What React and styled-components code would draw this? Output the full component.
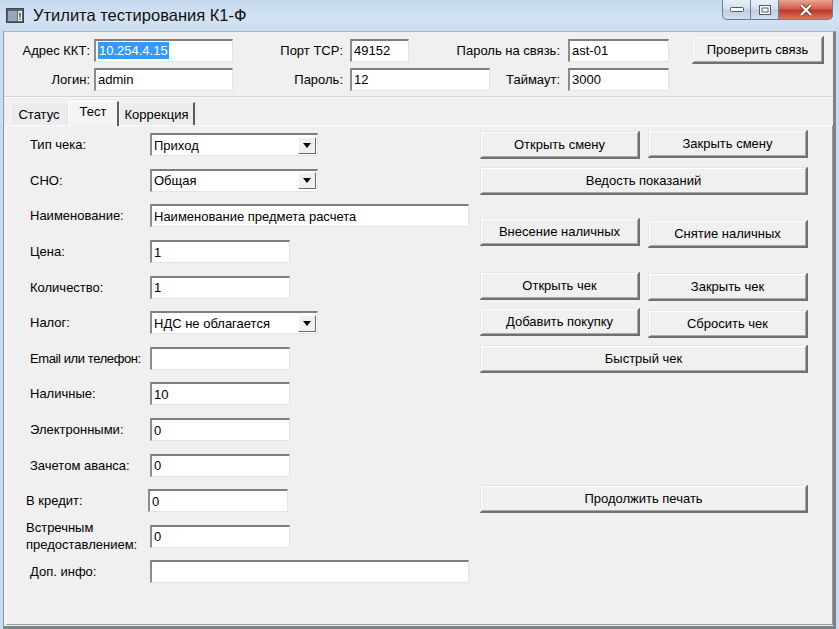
import React from "react";
import styled, { createGlobalStyle } from "styled-components";

const GlobalStyle = createGlobalStyle`
  html, body {
    margin: 0;
    padding: 0;
    background: #f0f0f0;
  }
  body {
    font-family: "Liberation Sans", Arial, sans-serif;
    font-size: 13px;
    color: #000;
  }
`;

const Window = styled.div`
  width: 839px;
  height: 629px;
  display: flex;
  flex-direction: column;
  background: #c9dcf0;
  overflow: hidden;
`;

const TitleBar = styled.div`
  height: 31px;
  display: flex;
  align-items: flex-start;
  background: linear-gradient(180deg, #c4d9ee 0%, #d3e3f4 60%, #cadcf0 100%);
  flex-shrink: 0;
`;

const AppIcon = styled.div`
  margin: 8px 0 0 6px;
  width: 18px;
  height: 15px;
  display: flex;
`;

const Title = styled.div`
  margin: 6px 0 0 9px;
  font-size: 16.5px;
  color: #111;
  flex: 1;
`;

const Controls = styled.div`
  display: flex;
  margin-right: 6px;
`;

const CtlButton = styled.div`
  width: ${(p) => p.$w}px;
  height: 20px;
  display: flex;
  align-items: center;
  justify-content: center;
  box-sizing: border-box;
  border: 1px solid #6f7f93;
  border-top: none;
  border-left: ${(p) => (p.$first ? "1px solid #6f7f93" : "none")};
  border-bottom-left-radius: ${(p) => (p.$first ? "5px" : "0")};
  border-bottom-right-radius: ${(p) => (p.$last ? "5px" : "0")};
  background: ${(p) =>
    p.$close
      ? "linear-gradient(180deg, #e8a493 0%, #d2604b 45%, #c0392b 55%, #d77a60 100%)"
      : "linear-gradient(180deg, #e9f0f8 0%, #d4e0ee 45%, #bfcfe2 55%, #d2dfee 100%)"};
`;

const Body = styled.div`
  flex: 1;
  display: flex;
  flex-direction: column;
  margin: 0 3px 0 3px;
  background: #f0f0f0;
  border-left: 1px solid #8a9bb0;
  border-right: 3px solid #7b828c;
  border-bottom: 3px solid #7b828c;
  border-top: 1px solid #a9b9cc;
  min-height: 0;
`;

const Header = styled.div`
  display: grid;
  grid-template-columns: 90px 139px 117px 140px 78px 101px 155px;
  grid-template-rows: 22px 22px;
  row-gap: 7px;
  padding: 7px 0 6px 0;
  align-items: center;
`;

const HLabel = styled.div`
  display: flex;
  justify-content: flex-end;
  min-width: 0;
  padding-right: ${(p) => p.$pr || 4}px;
  white-space: nowrap;
`;

const TextBox = styled.div`
  width: ${(p) => p.$w || 140}px;
  height: 23px;
  box-sizing: border-box;
  background: #fff;
  border-top: 2px solid #7e7e7e;
  border-left: 2px solid #8c8c8c;
  border-right: 1px solid #e4e4e4;
  border-bottom: 1px solid #e4e4e4;
  display: flex;
  align-items: center;
  padding-left: 2px;
  white-space: nowrap;
  overflow: hidden;
  flex-shrink: 0;
  margin-left: ${(p) => p.$dx || 0}px;
`;

const Selected = styled.span`
  background: #3399ff;
  color: #fff;
  padding: 1px 1px;
`;

const Button = styled.div`
  box-sizing: border-box;
  width: ${(p) => (p.$w ? `${p.$w}px` : "auto")};
  flex: ${(p) => (p.$w ? "none" : 1)};
  height: ${(p) => p.$h || 28}px;
  margin-top: ${(p) => p.$dy || 0}px;
  display: flex;
  align-items: center;
  justify-content: center;
  background: #f0f0f0;
  border-top: 1px solid #e6e6e6;
  border-left: 1px solid #e6e6e6;
  border-right: 2px solid #707070;
  border-bottom: 2px solid #707070;
  box-shadow: inset 1px 1px 0 #ffffff, inset -1px -1px 0 #a8a8a8;
  white-space: nowrap;
`;

const HeaderButton = styled(Button)`
  justify-self: end;
`;

const Divider = styled.div`
  height: 1px;
  background: #d4d4d4;
  border-bottom: 1px solid #fbfbfb;
`;

const TabStrip = styled.div`
  display: flex;
  align-items: flex-end;
  height: 27px;
  padding-left: 6px;
`;

const Tab = styled.div`
  box-sizing: border-box;
  width: ${(p) => p.$w}px;
  height: ${(p) => (p.$active ? 25 : 23)}px;
  display: flex;
  align-items: ${(p) => (p.$active ? "flex-start" : "center")};
  justify-content: center;
  padding-top: ${(p) => (p.$active ? 2 : 0)}px;
  background: ${(p) => (p.$active ? "#f4f4f4" : "#ececec")};
  border-top: 1px solid ${(p) => (p.$active ? "#ffffff" : "#f8f8f8")};
  border-left: 1px solid ${(p) => (p.$active ? "#ffffff" : "#f6f6f6")};
  border-right: ${(p) => (p.$dark ? "2px solid #5d5d5d" : "1px solid #e2e2e2")};
  margin-bottom: ${(p) => (p.$active ? -1 : 0)}px;
  position: relative;
  z-index: ${(p) => (p.$active ? 1 : 0)};
`;

const Panel = styled.div`
  flex: 1;
  margin: 0 0 1px 2px;
  display: flex;
  background: #f0f0f0;
  border-top: 1px solid #fcfcfc;
  border-left: 1px solid #fcfcfc;
  border-right: 1px solid #9a9a9a;
  border-bottom: 1px solid #9a9a9a;
  min-height: 0;
`;

const Form = styled.div`
  width: 450px;
  padding: 1px 0 0 23px;
  display: flex;
  flex-direction: column;
`;

const Row = styled.div`
  height: 35.6px;
  display: flex;
  align-items: center;
`;

const Label = styled.div`
  width: 120px;
  flex-shrink: 0;
  margin-left: ${(p) => p.$dx || 0}px;
  margin-right: ${(p) => -(p.$dx || 0)}px;
  letter-spacing: ${(p) => (p.$tight ? "-0.4px" : "normal")};
  line-height: 17px;
  white-space: nowrap;
`;

const Combo = styled(TextBox)`
  width: 168px;
  justify-content: space-between;
  padding-right: 1px;
`;

const DropButton = styled.div`
  width: 18px;
  height: 17px;
  box-sizing: border-box;
  display: flex;
  align-items: center;
  justify-content: center;
  background: #f0f0f0;
  border-top: 1px solid #fff;
  border-left: 1px solid #fff;
  border-right: 1px solid #6a6a6a;
  border-bottom: 1px solid #6a6a6a;
`;

const Actions = styled.div`
  width: 328px;
  padding-top: 5px;
  display: flex;
  flex-direction: column;
`;

const ActionRow = styled.div`
  display: flex;
  align-items: flex-start;
  height: 28px;
  gap: 8px;
  margin-top: ${(p) => p.$mt || 0}px;
`;

const WinIcon = () => (
  <svg width="18" height="15" viewBox="0 0 18 15">
    <rect x="0.5" y="0.5" width="17" height="14" fill="#5a6370" stroke="#3e444c" />
    <rect x="2" y="3" width="9" height="10" fill="#9aa7b6" />
    <rect x="12" y="3" width="4" height="10" fill="#f4f4f4" />
    <rect x="13.3" y="4.5" width="1.4" height="5" fill="#3e444c" />
    <rect x="13.3" y="10.5" width="1.4" height="1.4" fill="#3e444c" />
  </svg>
);

const DownArrow = () => (
  <svg width="8" height="5" viewBox="0 0 8 5">
    <path d="M0 0 H8 L4 5 Z" fill="#000" />
  </svg>
);

const ComboField = ({ value }) => (
  <Combo>
    <span>{value}</span>
    <DropButton>
      <DownArrow />
    </DropButton>
  </Combo>
);

const fields = [
  { label: "Тип чека:", combo: "Приход" },
  { label: "СНО:", combo: "Общая" },
  { label: "Наименование:", value: "Наименование предмета расчета", w: 319 },
  { label: "Цена:", value: "1" },
  { label: "Количество:", value: "1" },
  { label: "Налог:", combo: "НДС не облагается" },
  { label: "Email или телефон:", value: "", tight: true },
  { label: "Наличные:", value: "10" },
  { label: "Электронными:", value: "0" },
  { label: "Зачетом аванса:", value: "0" },
  { label: "В кредит:", value: "0", dx: -4, ix: -2 },
  { label: ["Встречным", "предоставлением:"], value: "0", dx: -4 },
  { label: "Доп. инфо:", value: "", w: 319 },
];

export default function App() {
  return (
    <>
      <GlobalStyle />
      <Window>
        <TitleBar>
          <AppIcon>
            <WinIcon />
          </AppIcon>
          <Title>Утилита тестирования К1-Ф</Title>
          <Controls>
            <CtlButton $w={29} $first>
              <svg width="14" height="6" viewBox="0 0 14 6">
                <rect x="0.5" y="0.5" width="13" height="4" rx="1" fill="#fff" stroke="#4b5b70" />
              </svg>
            </CtlButton>
            <CtlButton $w={28}>
              <svg width="12" height="10" viewBox="0 0 12 10">
                <rect x="0.5" y="0.5" width="11" height="9" fill="#fff" stroke="#4b5b70" />
                <rect x="3" y="3" width="6" height="4" fill="none" stroke="#4b5b70" />
              </svg>
            </CtlButton>
            <CtlButton $w={54} $close $last>
              <svg width="14" height="12" viewBox="0 0 14 12">
                <path d="M2 1 L12 11 M12 1 L2 11" stroke="#7a2a22" strokeWidth="4" />
                <path d="M2 1 L12 11 M12 1 L2 11" stroke="#fff" strokeWidth="2.4" />
              </svg>
            </CtlButton>
          </Controls>
        </TitleBar>
        <Body>
          <Header>
            <HLabel>Адрес ККТ:</HLabel>
            <TextBox $w={139}>
              <Selected>10.254.4.15</Selected>
            </TextBox>
            <HLabel $pr={7}>Порт TCP:</HLabel>
            <TextBox $w={59}>49152</TextBox>
            <HLabel $pr={8}>Пароль на связь:</HLabel>
            <TextBox $w={101}>ast-01</TextBox>
            <HeaderButton $w={132} $h={28}>
              Проверить связь
            </HeaderButton>
            <HLabel>Логин:</HLabel>
            <TextBox $w={139}>admin</TextBox>
            <HLabel $pr={7}>Пароль:</HLabel>
            <TextBox $w={140}>12</TextBox>
            <HLabel $pr={8}>Таймаут:</HLabel>
            <TextBox $w={101}>3000</TextBox>
          </Header>
          <Divider />
          <TabStrip>
            <Tab $w={58}>Статус</Tab>
            <Tab $w={51} $active $dark>
              Тест
            </Tab>
            <Tab $w={76} $dark>
              Коррекция
            </Tab>
          </TabStrip>
          <Panel>
            <Form>
              {fields.map((f, i) => (
                <Row key={i}>
                  <Label $dx={f.dx} $tight={f.tight}>
                    {Array.isArray(f.label)
                      ? f.label.map((l) => <div key={l}>{l}</div>)
                      : f.label}
                  </Label>
                  {f.combo ? (
                    <ComboField value={f.combo} />
                  ) : (
                    <TextBox $w={f.w || 140} $dx={f.ix}>
                      {f.value}
                    </TextBox>
                  )}
                </Row>
              ))}
            </Form>
            <Actions>
              <ActionRow>
                <Button>Открыть смену</Button>
                <Button $dy={-1}>Закрыть смену</Button>
              </ActionRow>
              <ActionRow $mt={8}>
                <Button>Ведость показаний</Button>
              </ActionRow>
              <ActionRow $mt={23}>
                <Button>Внесение наличных</Button>
                <Button $dy={2}>Снятие наличных</Button>
              </ActionRow>
              <ActionRow $mt={26}>
                <Button>Открыть чек</Button>
                <Button $dy={1}>Закрыть чек</Button>
              </ActionRow>
              <ActionRow $mt={8}>
                <Button>Добавить покупку</Button>
                <Button $dy={2}>Сбросить чек</Button>
              </ActionRow>
              <ActionRow $mt={9}>
                <Button>Быстрый чек</Button>
              </ActionRow>
              <ActionRow $mt={112}>
                <Button>Продолжить печать</Button>
              </ActionRow>
            </Actions>
          </Panel>
        </Body>
      </Window>
    </>
  );
}
